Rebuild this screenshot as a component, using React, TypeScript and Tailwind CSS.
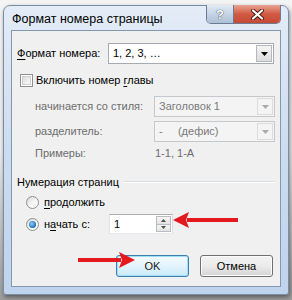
import React from 'react';

function DropArrow({ disabled }: { disabled?: boolean }) {
  return (
    <svg width="7" height="4" viewBox="0 0 7 4">
      <path d="M0 0h7L3.5 4z" fill={disabled ? '#a9a9a9' : '#000'} />
    </svg>
  );
}

function Combo({ text, width, disabled }: { text: string; width: string; disabled?: boolean }) {
  return (
    <div
      className={`flex h-[21px] ${width} items-stretch border ${
        disabled ? 'border-[#c5c9cc] bg-[#f4f4f4] text-[#7a7a7a]' : 'border-[#a6abb2] bg-white text-black'
      }`}
    >
      <div className="flex flex-1 items-center whitespace-pre pl-[4px] leading-none">{text}</div>
      <div
        className={`m-[1px] flex w-[16px] items-center justify-center border ${
          disabled ? 'border-[#dcdcdc] bg-[#f4f4f4]' : 'border-[#b5b8bd] bg-gradient-to-b from-[#f4f4f4] to-[#dcdcdc]'
        }`}
      >
        <DropArrow disabled={disabled} />
      </div>
    </div>
  );
}

function Radio({ checked }: { checked?: boolean }) {
  return (
    <div className="flex h-[13px] w-[13px] shrink-0 items-center justify-center rounded-full border border-[#8e8f8f] bg-gradient-to-br from-[#d6d6d6] via-[#f4f4f4] to-white">
      {checked && (
        <div className="h-[7px] w-[7px] rounded-full bg-[radial-gradient(circle_at_40%_40%,#8fd4ff_0%,#2b7ac0_60%,#134a7c_100%)]" />
      )}
    </div>
  );
}

function Arrow({ length }: { length: number }) {
  return (
    <svg width={length} height="16" viewBox={`0 0 ${length} 16`}>
      <rect x="0" y="6" width={length - 14} height="4" fill="#e3191d" />
      <path d={`M${length - 16} 0L${length} 8L${length - 16} 16L${length - 13} 8z`} fill="#e3191d" />
    </svg>
  );
}

export default function App() {
  return (
    <div className="relative h-[300px] w-[292px] overflow-hidden whitespace-nowrap bg-gradient-to-b from-[#f4f4f4] via-[#eeeeee] to-[#9c9c9c] font-['Liberation_Sans',Arial,sans-serif] text-[11px] text-black">
      <div className="pl-[3px] pt-[5px]">
        <div className="h-[290px] w-[286px] rounded-t-[7px] rounded-b-[3px] border border-[#7a8ea8] bg-gradient-to-b from-[#e3ecf7] via-[#cddcf0] to-[#bfd3ec] px-[7px] pb-[7px] shadow-[1px_2px_4px_rgba(0,0,0,0.45)]">
          {/* title bar */}
          <div className="flex h-[24px] items-start">
            <div className="flex h-[24px] flex-1 items-center pl-[1px] pt-[3px] text-[12.5px] leading-none text-black">
              Формат номера страницы
            </div>
            <div className="-mt-[1px] flex h-[19px] overflow-hidden rounded-b-[5px] border border-t-0 border-[#6b7c92]">
              <div className="flex w-[27px] items-center justify-center border-r border-[#6b7c92] bg-gradient-to-b from-[#e2ebf5] via-[#c5d4e6] to-[#aebfd6]">
                <span className="text-[13px] font-bold leading-none text-white [text-shadow:0_0_1px_#33475f,0_0_1px_#33475f]">
                  ?
                </span>
              </div>
              <div className="flex w-[46px] items-center justify-center bg-gradient-to-b from-[#e8a493] via-[#d15a43] to-[#c64a36]">
                <svg width="13" height="11" viewBox="0 0 13 11">
                  <path d="M2 1.5l9 8M11 1.5l-9 8" stroke="#4a1a14" strokeWidth="4" strokeLinecap="round" />
                  <path d="M2 1.5l9 8M11 1.5l-9 8" stroke="#fff" strokeWidth="2.2" strokeLinecap="round" />
                </svg>
              </div>
            </div>
          </div>

          {/* client area */}
          <div className="h-[257px] border border-[#8397b0] bg-[#f0f0f0]">
            <div className="mt-[12px] flex h-[21px] items-center pl-[5px]">
              <div className="w-[91px]">
                <span className="underline underline-offset-2">Ф</span>ормат номера:
              </div>
              <Combo text="1, 2, 3, …" width="w-[166px]" />
            </div>

            <div className="mt-[7px] flex h-[18px] items-center pl-[8px]">
              <div className="h-[13px] w-[13px] border border-[#8e8f8f] bg-white p-[1px]">
                <div className="h-full w-full border border-[#d0d0d0] bg-gradient-to-br from-[#dcdcdc] to-[#fbfbfb]" />
              </div>
              <div className="ml-[3px]">
                Включить номер <span className="underline underline-offset-2">г</span>лавы
              </div>
            </div>

            <div className="mt-[7px] flex h-[21px] items-center pl-[23px] text-[#6d6d6d]">
              <div className="w-[119px]">начинается со стиля:</div>
              <Combo text="Заголовок 1" width="w-[121px]" disabled />
            </div>
            <div className="mt-[4px] flex h-[21px] items-center pl-[23px] text-[#6d6d6d]">
              <div className="w-[119px]">разделитель:</div>
              <Combo text="-     (дефис)" width="w-[121px]" disabled />
            </div>
            <div className="mt-[3px] flex h-[16px] items-center pl-[23px] text-[#6d6d6d]">
              <div className="w-[120px]">Примеры:</div>
              <div>1-1, 1-А</div>
            </div>

            <div className="mt-[13px] flex h-[16px] items-center pl-[5px] pr-[5px]">
              <div>Нумерация страниц</div>
              <div className="ml-[4px] flex-1 border-t border-b border-t-[#d5dfe5] border-b-white" />
            </div>

            <div className="mt-[4px] flex h-[16px] items-center gap-[5px] pl-[14px]">
              <Radio />
              <div>
                <span className="underline underline-offset-2">п</span>родолжить
              </div>
            </div>
            <div className="mt-[4px] flex h-[20px] items-center gap-[5px] pl-[14px]">
              <Radio checked />
              <div className="w-[60px]">
                н<span className="underline underline-offset-2">а</span>чать с:
              </div>
              <div className="flex h-[20px] w-[64px] items-stretch border border-[#abadb3] border-b-[#e3e9ef] border-l-[#e2e3ea] border-r-[#dbdfe6] bg-white">
                <div className="flex flex-1 items-center pl-[4px]">1</div>
                <div className="m-[1px] flex w-[15px] flex-col">
                  <div className="flex flex-1 items-center justify-center border border-[#b9bcc1] bg-gradient-to-b from-[#f6f6f6] to-[#e2e2e2]">
                    <svg width="5" height="3" viewBox="0 0 5 3">
                      <path d="M0 3h5L2.5 0z" fill="#4d4d4d" />
                    </svg>
                  </div>
                  <div className="flex flex-1 items-center justify-center border border-t-0 border-[#b9bcc1] bg-gradient-to-b from-[#f6f6f6] to-[#e2e2e2]">
                    <svg width="5" height="3" viewBox="0 0 5 3">
                      <path d="M0 0h5L2.5 3z" fill="#4d4d4d" />
                    </svg>
                  </div>
                </div>
              </div>
            </div>

            <div className="mt-[21px] flex h-[22px] justify-end gap-[11px] pr-[7px]">
              <button className="w-[73px] rounded-[3px] border border-[#3c7fb1] bg-gradient-to-b from-[#f3fafe] via-[#e3f4fc] to-[#c9eaf9] font-normal leading-none text-[#1a1a1a] shadow-[inset_0_0_0_1px_#9fe0f8]">
                OK
              </button>
              <button className="w-[73px] rounded-[3px] border border-[#707070] bg-gradient-to-b from-[#f2f2f2] via-[#ebebeb] to-[#d4d4d4] font-normal leading-none shadow-[inset_0_0_0_1px_#fcfcfc]">
                Отмена
              </button>
            </div>
          </div>
        </div>
      </div>

      {/* annotation arrows */}
      <div className="absolute left-[173px] top-[212px] rotate-180">
        <Arrow length={65} />
      </div>
      <div className="absolute left-[78px] top-[252px]">
        <Arrow length={57} />
      </div>
    </div>
  );
}
